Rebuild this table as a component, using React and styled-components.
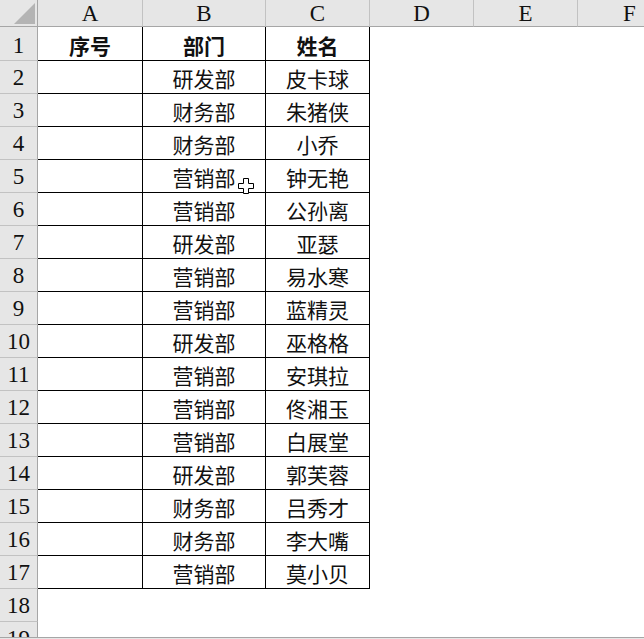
import React from 'react';
import styled, { createGlobalStyle } from 'styled-components';

const GlobalStyle = createGlobalStyle`
    html, body {
        margin: 0;
        padding: 0;
        background: #ffffff;
    }
`;

const columns = ['A', 'B', 'C', 'D', 'E', 'F'];
const colWidths = [105, 123, 104, 104, 104, 104];

const rows = [
    ['', '研发部', '皮卡球'],
    ['', '财务部', '朱猪侠'],
    ['', '财务部', '小乔'],
    ['', '营销部', '钟无艳'],
    ['', '营销部', '公孙离'],
    ['', '研发部', '亚瑟'],
    ['', '营销部', '易水寒'],
    ['', '营销部', '蓝精灵'],
    ['', '研发部', '巫格格'],
    ['', '营销部', '安琪拉'],
    ['', '营销部', '佟湘玉'],
    ['', '营销部', '白展堂'],
    ['', '研发部', '郭芙蓉'],
    ['', '财务部', '吕秀才'],
    ['', '财务部', '李大嘴'],
    ['', '营销部', '莫小贝'],
];

const header = ['序号', '部门', '姓名'];
const TOTAL_ROWS = 19;

const App = () => {
    const tableRows = [header, ...rows];

    return (
        <Window>
            <GlobalStyle />
            <Sheet>
                <Grid>
                    <Corner>
                        <svg width="37" height="26" viewBox="0 0 37 26">
                            <polygon points="14,24 35,24 35,3" fill="#b4b4b4" />
                        </svg>
                    </Corner>
                    {columns.map((c) => (
                        <ColHeader key={c}>{c}</ColHeader>
                    ))}
                    {Array.from({ length: TOTAL_ROWS }, (_, r) => (
                        <React.Fragment key={r}>
                            <RowHeader $first={r === 0}>{r + 1}</RowHeader>
                            {columns.map((c, ci) => {
                                const inTable = ci < 3 && r < tableRows.length;
                                return (
                                    <Cell key={c} $bordered={inTable} $bold={r === 0}>
                                        {inTable ? tableRows[r][ci] : ''}
                                    </Cell>
                                );
                            })}
                        </React.Fragment>
                    ))}
                </Grid>
                <Cursor>
                    <svg width="16" height="16" viewBox="0 0 16 16">
                        <path
                            d="M5.5 0.5 H10.5 V5.5 H15.5 V10.5 H10.5 V15.5 H5.5 V10.5 H0.5 V5.5 H5.5 Z"
                            fill="#ffffff"
                            stroke="#000000"
                            strokeWidth="1"
                        />
                    </svg>
                </Cursor>
            </Sheet>
            <ScrollEdge />
        </Window>
    );
};

export default App;

const Window = styled.div`
    width: 644px;
    height: 639px;
    display: flex;
    flex-direction: column;
    overflow: hidden;
    background: #ffffff;
`;

const Sheet = styled.div`
    position: relative;
    flex: 1;
    overflow: hidden;
`;

const Grid = styled.div`
    display: grid;
    grid-template-columns: 38px ${colWidths.map((w) => `${w}px`).join(' ')};
    grid-template-rows: 27px 34px repeat(${TOTAL_ROWS - 1}, 33px);
    width: max-content;
`;

const Corner = styled.div`
    box-sizing: border-box;
    background: #e6e6e6;
    border-right: 1px solid #a6a6a6;
    border-bottom: 1px solid #a6a6a6;
    display: flex;
    svg {
        display: block;
    }
`;

const ColHeader = styled.div`
    box-sizing: border-box;
    background: #e6e6e6;
    border-right: 1px solid #c2c2c2;
    border-bottom: 1px solid #a6a6a6;
    display: flex;
    align-items: center;
    justify-content: center;
    padding-top: 1px;
    font-family: 'Liberation Serif', 'Noto Sans CJK SC', serif;
    font-size: 23px;
    color: #111111;
`;

const RowHeader = styled.div`
    box-sizing: border-box;
    background: #e6e6e6;
    border-right: 1px solid #a6a6a6;
    border-bottom: 1px solid #c2c2c2;
    display: flex;
    align-items: center;
    justify-content: center;
    padding-top: ${(p) => (p.$first ? '4px' : '2px')};
    font-family: 'Liberation Serif', 'Noto Sans CJK SC', serif;
    font-size: 23px;
    color: #111111;
`;

const Cell = styled.div`
    box-sizing: border-box;
    border-right: 1px solid ${(p) => (p.$bordered ? '#000000' : 'transparent')};
    border-bottom: 1px solid ${(p) => (p.$bordered ? '#000000' : 'transparent')};
    display: flex;
    align-items: center;
    justify-content: center;
    padding-top: 2px;
    font-family: 'Liberation Serif', 'Noto Sans CJK SC', serif;
    font-size: 21px;
    font-weight: ${(p) => (p.$bold ? 700 : 400)};
    color: #111111;
    white-space: nowrap;
`;

const Cursor = styled.div`
    position: absolute;
    left: 238px;
    top: 178px;
    line-height: 0;
    pointer-events: none;
`;

const ScrollEdge = styled.div`
    height: 1px;
    border-top: 1px solid #a6a6a6;
    background: #e6e6e6;
`;
